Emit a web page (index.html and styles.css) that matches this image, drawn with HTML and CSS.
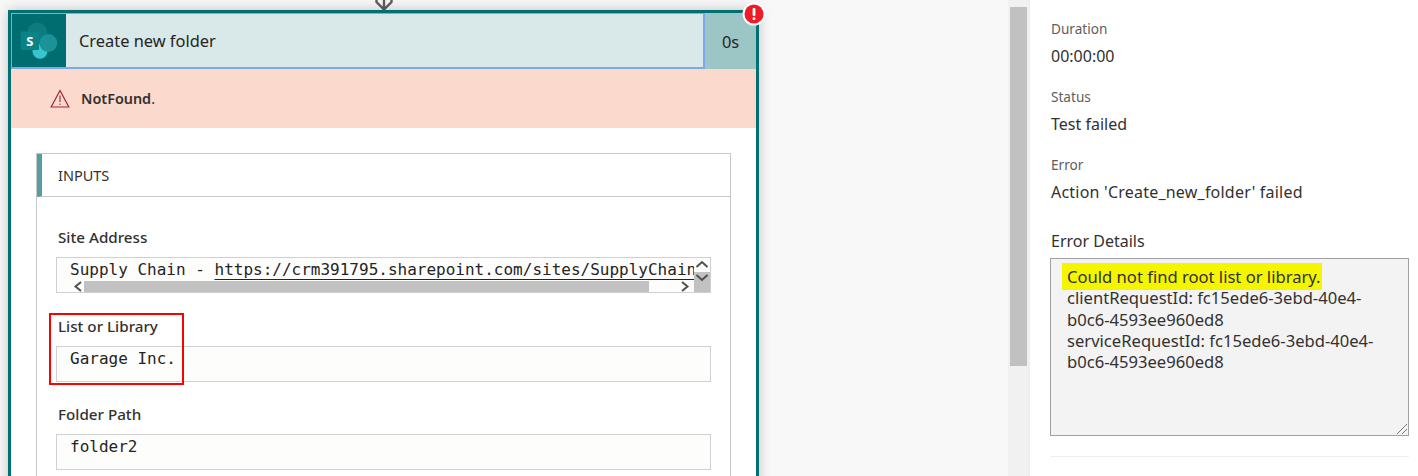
FILE: index.html
```html
<!DOCTYPE html>
<html lang="en">
<head>
<meta charset="utf-8">
<title>Create new folder</title>
<link rel="stylesheet" href="styles.css">
</head>
<body>
<div class="page">
  <main class="canvas">
    <svg class="connector" width="22" height="10" viewBox="0 0 22 10"><path d="M11 9.5 L3.5 2 L3.5 0 M11 9.5 L18.5 2 L18.5 0 M11 0 V9" fill="none" stroke="#605e5c" stroke-width="2.4"/></svg>
    <section class="card">
      <svg class="badge" width="24" height="24" viewBox="0 0 24 24"><circle cx="12" cy="12" r="11.5" fill="#fff"/><circle cx="12" cy="12" r="9.5" fill="#ee1c25"/><rect x="10.6" y="6" width="2.8" height="8" rx="1" fill="#fff"/><rect x="10.6" y="15.2" width="2.8" height="2.8" rx="1" fill="#fff"/></svg>
      <header class="card-head">
        <div class="card-main">
          <div class="card-icon">
            <svg width="40" height="38" viewBox="0 0 40 38">
              <circle cx="18.3" cy="10.6" r="10" fill="#0e7b7e"/>
              <circle cx="21" cy="29.3" r="7.5" fill="#37c6d0"/>
              <circle cx="29.3" cy="21" r="9" fill="#1b9298"/>
              <rect x="1.7" y="9.5" width="18.3" height="18.5" rx="1" fill="#0b8286"/>
              <text x="10.8" y="24" class="icon-letter">S</text>
            </svg>
          </div>
          <div class="card-title">Create new folder</div>
        </div>
        <div class="card-time">0s</div>
      </header>
      <div class="error-band">
        <svg width="20" height="19" viewBox="0 0 20 19"><path d="M10 1.5 L18.8 18 H1.2 Z" fill="none" stroke="#a4262c" stroke-width="1.2"/><path d="M10 6.5 V13 M10 14.5 V16" stroke="#a4262c" stroke-width="1.1" fill="none"/></svg>
        <span class="error-text"><strong>NotFound</strong>.</span>
      </div>
      <div class="card-body">
        <div class="inputs">
          <div class="inputs-head"><span class="inputs-title">INPUTS</span></div>
          <div class="inputs-body">
            <div class="field">
              <div class="field-label">Site Address</div>
              <div class="field-box field-scroll">
                <div class="scroll-main">
                  <div class="mono-line">Supply Chain - <span class="link">https://crm391795.sharepoint.com/sites/SupplyChain</span></div>
                  <div class="hbar">
                    <svg class="chev" width="12" height="11" viewBox="0 1 12 11"><path d="M9 2 L3.5 6.5 L9 11" fill="none" stroke="#505050" stroke-width="2"/></svg>
                    <div class="hthumb"></div>
                    <svg class="chev chev-right" width="12" height="11" viewBox="0 1 12 11"><path d="M3 2 L8.5 6.5 L3 11" fill="none" stroke="#505050" stroke-width="2"/></svg>
                  </div>
                </div>
                <div class="vbar">
                  <svg class="vchev" width="16" height="14" viewBox="0 0 16 14"><path d="M2.5 9 L8 4 L13.5 9" fill="none" stroke="#505050" stroke-width="2"/></svg>
                  <div class="vthumb"><svg width="16" height="14" viewBox="0 0 16 14"><path d="M2.5 3 L8 8 L13.5 3" fill="none" stroke="#505050" stroke-width="2"/></svg></div>
                </div>
              </div>
            </div>
            <div class="field">
              <div class="field-label">List or Library</div>
              <div class="field-box"><div class="mono-line">Garage Inc.</div></div>
            </div>
            <div class="field">
              <div class="field-label">Folder Path</div>
              <div class="field-box"><div class="mono-line">folder2</div></div>
            </div>
          </div>
        </div>
      </div>
      <div class="callout"></div>
    </section>
  </main>
  <div class="scrolltrack"><div class="scrollthumb"></div></div>
  <aside class="pane">
    <div class="kv"><div class="k">Duration</div><div class="v">00:00:00</div></div>
    <div class="kv"><div class="k">Status</div><div class="v">Test failed</div></div>
    <div class="kv"><div class="k">Error</div><div class="v v-wide">Action 'Create_new_folder' failed</div></div>
    <div class="details-label">Error Details</div>
    <div class="details">
      <span class="hl">Could not find root list or library.</span><br>
      clientRequestId: fc15ede6-3ebd-40e4-<br>b0c6-4593ee960ed8<br>
      serviceRequestId: fc15ede6-3ebd-40e4-<br>b0c6-4593ee960ed8
      <svg class="grip" width="12" height="12" viewBox="0 0 12 12"><path d="M1 11 L11 1 M6 11 L11 6" stroke="#777" stroke-width="1" fill="none"/></svg>
    </div>
    <hr class="rule">
  </aside>
</div>
</body>
</html>
```

FILE: styles.css
```css
* { box-sizing: border-box; }
html, body { margin: 0; height: 100%; overflow: hidden; }
body { background: #f8f8f8; font-family: "Noto Sans", "Open Sans", sans-serif; color: #323130; }
.page { display: flex; width: 1418px; height: 476px; overflow: hidden; }

.canvas { position: relative; width: 1008px; flex: none; padding: 10px 0 0 8px; }
.connector { position: absolute; left: 373px; top: 0; }

.card { position: relative; width: 751px; height: 600px; border: 3px solid #007073; border-bottom: 0; background: #fff; box-shadow: 0 0 12px rgba(0, 0, 0, .22); }
.badge { position: absolute; right: -10px; top: -11px; z-index: 2; }
.card-head { display: flex; height: 56px; }
.card-main { flex: 1; display: flex; border: 1px solid #7ba9ea; border-width: 1px 2px 2px 1px; }
.card-icon { width: 54px; flex: none; background: #006e70; display: flex; align-items: center; justify-content: center; }
.icon-letter { font: 700 13px "Open Sans", sans-serif; fill: #fff; text-anchor: middle; }
.card-title { flex: 1; background: #d9e8e8; display: flex; align-items: center; padding-left: 13px; font-size: 16.4px; color: #252423; }
.card-time { width: 51px; flex: none; background: #9cc5c5; display: flex; align-items: center; justify-content: center; font-size: 16.4px; color: #252423; }

.error-band { height: 59px; background: #fbd9cd; display: flex; align-items: center; gap: 11px; padding-left: 39px; font-size: 14.4px; }
.error-text strong { font-weight: 600; color: #323130; }

.card-body { padding: 25px 25px 0 25px; }
.inputs { border: 1px solid #c8c8c8; }
.inputs-head { height: 43px; border-left: 5px solid #559d9e; border-bottom: 1px solid #c8c8c8; display: flex; align-items: center; padding-left: 16px; font-size: 14.5px; }
.inputs-body { padding: 30px 19px 60px 19px; display: flex; flex-direction: column; gap: 22.5px; }

.field-label { font-size: 15.2px; font-weight: 500; line-height: 20px; margin: 0 0 10px 2px; color: #323130; }
.field-box { height: 36px; border: 1px solid #d0d0d0; background: #fdfdfc; }
.mono-line { font: 16px/22px "DejaVu Sans Mono", monospace; height: 24px; padding: 1px 0 0 13px; white-space: pre; overflow: hidden; color: #252423; }
.field-scroll { display: flex; }
.scroll-main { flex: 1; min-width: 0; display: flex; flex-direction: column; }
.link { text-decoration: underline; text-decoration-thickness: 1px; text-underline-offset: 4px; }
.hbar { display: flex; height: 11px; margin-top: -1px; padding-left: 15px; align-items: stretch; }
.chev { flex: none; }
.hthumb { width: 565px; background: #c1c1c1; }
.chev-right { margin-left: 30px; }
.vbar { width: 16px; flex: none; display: flex; flex-direction: column; }
.vchev { display: block; }
.vthumb { flex: 1; background: #c1c1c1; }
.vthumb svg { display: block; }

.callout { position: absolute; left: 38px; top: 300px; width: 135px; height: 72px; border: 2px solid #f00; }

.scrolltrack { width: 20px; flex: none; background: #f1f1f1; padding: 7px 1px 0 2px; }
.scrollthumb { height: 359px; background: #c1c1c1; }

.pane { flex: 1; background: #fff; border-left: 2px solid #eee; padding: 19px 9px 0 21px; }
.kv { margin-bottom: 19px; }
.k { font-size: 13.6px; line-height: 20px; color: #605e5c; }
.v { font-size: 16px; line-height: 24px; margin-top: 5px; color: #323130; }
.v-wide { letter-spacing: .22px; }
.details-label { font-size: 16px; line-height: 24px; margin-top: 25px; color: #323130; }
.details { position: relative; height: 178px; margin-top: 5px; margin-left: -1px; background: #f3f3f3; border: 1px solid #a0a0a0; padding: 7px 0 0 16px; font-size: 16.6px; line-height: 21.3px; color: #323130; }
.hl { background: #f5f500; padding: 2px 1px 2px 5px; margin-left: -5px; }
.grip { position: absolute; right: 0; bottom: 0; }
.rule { border: 0; border-top: 1px solid #eee; margin: 20px 0 0 -1px; }
```
